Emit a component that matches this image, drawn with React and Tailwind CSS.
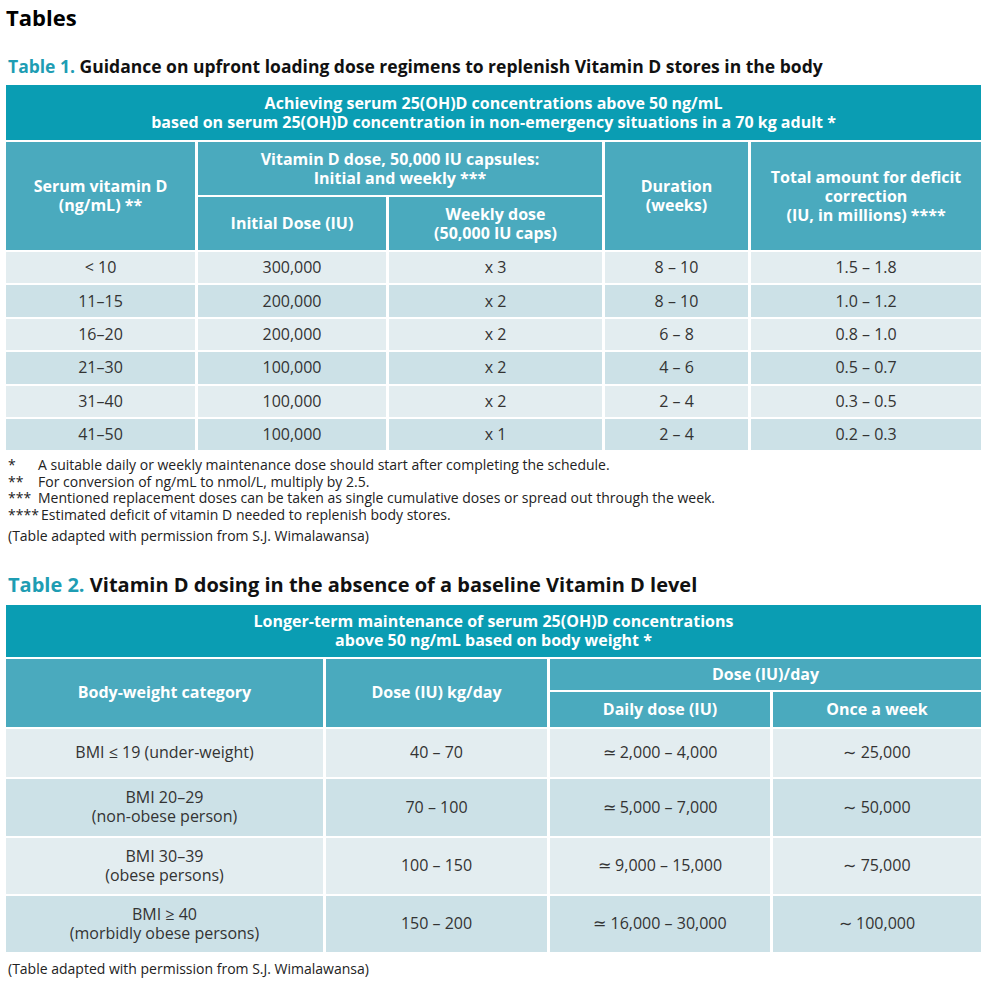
const table1Rows = [
  ['< 10', '300,000', 'x 3', '8 – 10', '1.5 – 1.8'],
  ['11–15', '200,000', 'x 2', '8 – 10', '1.0 – 1.2'],
  ['16–20', '200,000', 'x 2', '6 – 8', '0.8 – 1.0'],
  ['21–30', '100,000', 'x 2', '4 – 6', '0.5 – 0.7'],
  ['31–40', '100,000', 'x 2', '2 – 4', '0.3 – 0.5'],
  ['41–50', '100,000', 'x 1', '2 – 4', '0.2 – 0.3'],
];

const table2Rows = [
  { cat: ['BMI ≤ 19 (under-weight)'], kg: '40 – 70', daily: '≃ 2,000 – 4,000', week: '∼ 25,000', h: 'h-[48px]' },
  { cat: ['BMI 20–29', '(non-obese person)'], kg: '70 – 100', daily: '≃ 5,000 – 7,000', week: '∼ 50,000', h: 'h-[57px]' },
  { cat: ['BMI 30–39', '(obese persons)'], kg: '100 – 150', daily: '≃ 9,000 – 15,000', week: '∼ 75,000', h: 'h-[56px]' },
  { cat: ['BMI ≥ 40', '(morbidly obese persons)'], kg: '150 – 200', daily: '≃ 16,000 – 30,000', week: '∼ 100,000', h: 'h-[56px]' },
];

const footnotes = [
  ['*', 'A suitable daily or weekly maintenance dose should start after completing the schedule.'],
  ['**', 'For conversion of ng/mL to nmol/L, multiply by 2.5.'],
  ['***', 'Mentioned replacement doses can be taken as single cumulative doses or spread out through the week.'],
  ['****', 'Estimated deficit of vitamin D needed to replenish body stores.'],
];

export default function App() {
  // header cells: dark strip on top, lighter teal below
  const thBase = 'text-white font-bold text-[16px] leading-[19px] text-center align-middle p-0';
  const th = `${thBase} bg-[#4aaabe]`;
  const thTop = `${thBase} bg-[#0a9db3]`;
  const td = 'text-[16px] text-[#333] text-center align-middle p-0 leading-[19px]';

  return (
    <div className="w-[988px] min-h-[985px] bg-white font-['Open_Sans','Liberation_Sans',sans-serif]">
      <h1 className="pl-[6px] pt-[3px] text-[22px] font-bold leading-[28px] text-black">Tables</h1>

      <h3 className="mt-[24px] pl-[8px] text-[17.5px] font-bold leading-[22px] text-[#111]">
        <span className="text-[#1e9db3]">Table 1.</span> Guidance on upfront loading dose regimens to replenish Vitamin D stores in the body
      </h3>

      <table className="ml-[3px] mt-[6px] w-[981px] border-separate border-spacing-x-[3px] border-spacing-y-[2px] table-fixed">
        <colgroup>
          <col className="w-[189px]" />
          <col className="w-[188px]" />
          <col className="w-[213px]" />
          <col className="w-[143px]" />
          <col className="w-[230px]" />
        </colgroup>
        <thead>
          <tr>
            <th colSpan={5} className={`${thTop} h-[55px]`}>
              Achieving serum 25(OH)D concentrations above 50 ng/mL
              <br />
              based on serum 25(OH)D concentration in non-emergency situations in a 70 kg adult *
            </th>
          </tr>
          <tr>
            <th rowSpan={2} className={th}>
              Serum vitamin D
              <br />
              (ng/mL) **
            </th>
            <th colSpan={2} className={`${th} h-[53px]`}>
              Vitamin D dose, 50,000 IU capsules:
              <br />
              Initial and weekly ***
            </th>
            <th rowSpan={2} className={th}>
              Duration
              <br />
              (weeks)
            </th>
            <th rowSpan={2} className={th}>
              Total amount for deficit
              <br />
              correction
              <br />
              (IU, in millions) ****
            </th>
          </tr>
          <tr>
            <th className={`${th} h-[53px]`}>Initial Dose (IU)</th>
            <th className={th}>
              Weekly dose
              <br />
              (50,000 IU caps)
            </th>
          </tr>
        </thead>
        <tbody>
          {table1Rows.map((row, i) => (
            <tr key={i} className={i % 2 === 0 ? 'bg-[#e3edf0]' : 'bg-[#cce1e7]'}>
              {row.map((cell, j) => (
                <td key={j} className={`${td} h-[31.4px]`}>
                  {cell}
                </td>
              ))}
            </tr>
          ))}
        </tbody>
      </table>

      <div className="mt-[5px] pl-[8px] text-[14px] leading-[16.5px] text-[#222]">
        {footnotes.map(([mark, text]) => (
          <div key={mark} className="flex">
            <span className="w-[30px] shrink-0 whitespace-nowrap">{mark}</span>
            <span className={mark.length > 3 ? 'pl-[3px]' : ''}>{text}</span>
          </div>
        ))}
        <p className="mt-[5px]">(Table adapted with permission from S.J. Wimalawansa)</p>
      </div>

      <h3 className="mt-[28px] pl-[8px] text-[20px] font-bold leading-[24px] text-[#111]">
        <span className="text-[#1e9db3]">Table 2.</span> Vitamin D dosing in the absence of a baseline Vitamin D level
      </h3>

      <table className="ml-[3px] mt-[6px] w-[981px] border-separate border-spacing-x-[3px] border-spacing-y-[2px] table-fixed">
        <colgroup>
          <col className="w-[317px]" />
          <col className="w-[221px]" />
          <col className="w-[220px]" />
          <col className="w-[208px]" />
        </colgroup>
        <thead>
          <tr>
            <th colSpan={4} className={`${thTop} h-[52px]`}>
              Longer-term maintenance of serum 25(OH)D concentrations
              <br />
              above 50 ng/mL based on body weight *
            </th>
          </tr>
          <tr>
            <th rowSpan={2} className={th}>Body-weight category</th>
            <th rowSpan={2} className={th}>Dose (IU) kg/day</th>
            <th colSpan={2} className={`${th} h-[31px]`}>Dose (IU)/day</th>
          </tr>
          <tr>
            <th className={`${th} h-[35px]`}>Daily dose (IU)</th>
            <th className={th}>Once a week</th>
          </tr>
        </thead>
        <tbody>
          {table2Rows.map((row, i) => (
            <tr key={i} className={i % 2 === 0 ? 'bg-[#e3edf0]' : 'bg-[#cce1e7]'}>
              <td className={`${td} ${row.h}`}>
                {row.cat.map((line, k) => (
                  <div key={k}>{line}</div>
                ))}
              </td>
              <td className={td}>{row.kg}</td>
              <td className={td}>{row.daily}</td>
              <td className={td}>{row.week}</td>
            </tr>
          ))}
        </tbody>
      </table>

      <p className="mt-[6px] pl-[8px] text-[14px] leading-[17px] text-[#222]">
        (Table adapted with permission from S.J. Wimalawansa)
      </p>
    </div>
  );
}
